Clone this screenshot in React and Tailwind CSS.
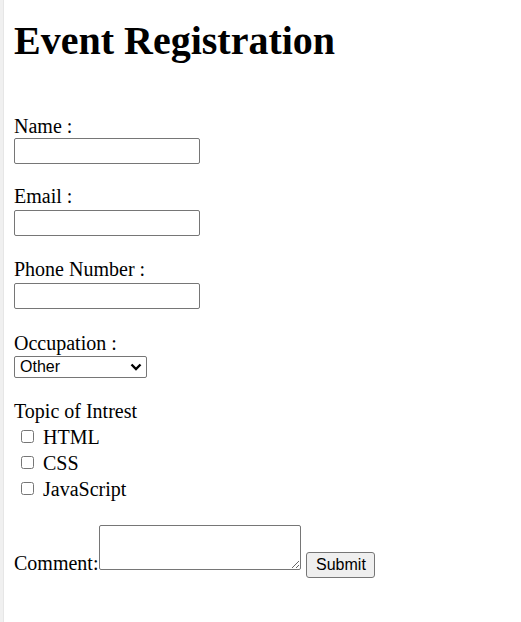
import React from "react";

const topics = ["HTML", "CSS", "JavaScript"];

export default function App() {
  return (
    <div className="flex min-h-[622px] bg-white text-black font-['Liberation_Serif',serif] text-[20px]">
      {/* window edge strip */}
      <div className="w-[4px] shrink-0 bg-[#f0f0f0] border-r border-[#e6e6e6]" />

      <form className="flex flex-col items-start pl-[10px]" onSubmit={(e) => e.preventDefault()}>
        <h1 className="mt-[18px] text-[40px] font-bold leading-[46px]">Event Registration</h1>

        <label className="mt-[51px] leading-[23px]">Name :</label>
        <input type="text" className="w-[186px] h-[26px] border border-[#767676] rounded-[2px] bg-white" />

        <label className="mt-[21px] leading-[23px]">Email :</label>
        <input type="email" className="mt-[2px] w-[186px] h-[26px] border border-[#767676] rounded-[2px] bg-white" />

        <label className="mt-[22px] leading-[23px]">Phone Number :</label>
        <input type="tel" className="mt-[2px] w-[186px] h-[26px] border border-[#767676] rounded-[2px] bg-white" />

        <label className="mt-[23px] leading-[23px]">Occupation :</label>
        <div className="relative mt-[1px] flex">
          <select
            defaultValue="Other"
            className="block appearance-none w-[133px] h-[22px] pl-[5px] border border-[#767676] rounded-[2px] bg-white font-['Liberation_Sans',sans-serif] text-[16px] leading-[20px]"
          >
            <option>Student</option>
            <option>Employee</option>
            <option>Other</option>
          </select>
          <svg
            className="pointer-events-none absolute right-[5px] top-[7px]"
            width="12"
            height="8"
            viewBox="0 0 12 8"
            fill="none"
          >
            <path d="M1.5 1.5 6 6l4.5-4.5" stroke="#000" strokeWidth="2.4" />
          </svg>
        </div>

        <div className="mt-[22px] leading-[23px]">Topic of Intrest</div>
        <div className="mt-[3px] flex flex-col">
          {topics.map((t) => (
            <label key={t} className="flex items-start h-[26px]">
              <input type="checkbox" className="mt-[4px] ml-[7px] w-[13px] h-[13px]" />
              <span className="ml-[9px] leading-[23px]">{t}</span>
            </label>
          ))}
        </div>

        <div className="mt-[21px] flex items-start">
          <span className="mt-[27px] leading-[23px]">Comment:</span>
          <textarea className="ml-[1px] w-[202px] h-[45px] border border-[#767676] rounded-[2px] bg-white" />
          <button
            type="submit"
            className="mt-[27px] ml-[5px] w-[69px] h-[26px] border border-[#767676] rounded-[3px] bg-[#efefef] font-['Liberation_Sans',sans-serif] text-[16px]"
          >
            Submit
          </button>
        </div>
      </form>
    </div>
  );
}
